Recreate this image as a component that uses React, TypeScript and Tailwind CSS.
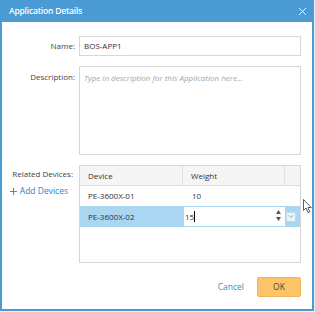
import { Plus, X, ChevronDown } from "lucide-react";

const font = { fontFamily: '"Open Sans", "Liberation Sans", sans-serif' };

export default function App() {
  return (
    <div className="relative w-[315px] h-[312px] bg-[#eef0f2] overflow-hidden" style={font}>
      <div className="flex flex-col w-[314px] h-[311px] bg-white border-x-2 border-b-2 border-[#4a9ad4]">
        <div className="flex items-center justify-between h-[22px] -mx-[2px] pl-[9px] pr-[5px] bg-[#4a9ad4] text-white">
          <span className="text-[8.5px] font-semibold tracking-[-0.2px]">Application Details</span>
          <X size={13} strokeWidth={1.6} />
        </div>

        <div className="flex flex-col gap-[10px] pt-[14px] pr-[11px] text-[8px] text-[#444]">
          <div className="flex items-center gap-[4px]">
            <label className="w-[73px] text-right">Name:</label>
            <div className="flex items-center flex-1 h-[20px] px-[4px] border border-[#d6d6d6] text-[#333]">BOS-APP1</div>
          </div>

          <div className="flex items-start gap-[4px]">
            <label className="w-[73px] pt-[5px] text-right">Description:</label>
            <div className="flex-1 h-[89px] px-[4px] pt-[5px] border border-[#d6d6d6] italic text-[#a5a5a5]">
              Type in description for this Application here...
            </div>
          </div>

          <div className="flex items-start gap-[4px]">
            <div className="flex flex-col items-end w-[73px] pt-[3px]">
              <span className="pr-[2px]">Related Devices:</span>
              <span className="flex items-center gap-[1px] pr-[7px] mt-[5px] text-[8.5px] text-[#2b84c8]">
                <Plus size={11} strokeWidth={2} />
                Add Devices
              </span>
            </div>
            <div className="flex flex-col flex-1 h-[98px] border border-[#d6d6d6] text-[#333]">
              <div className="flex h-[20px] bg-[#f5f5f5] border-b border-[#dcdcdc]">
                <div className="flex items-center w-[103px] pl-[8px] border-r border-[#e2e2e2]">Device</div>
                <div className="flex items-center w-[102px] pl-[8px] border-r border-[#e2e2e2]">Weight</div>
                <div className="flex-1" />
              </div>
              <div className="flex items-center h-[20px]">
                <div className="w-[103px] pl-[8px]">PE-3600X-01</div>
                <div className="pl-[9px]">10</div>
              </div>
              <div className="flex items-center h-[21px] bg-[#abd6f2]">
                <div className="w-[104px] pl-[8px]">PE-3600X-02</div>
                <div className="relative flex items-center w-[101px] h-[19px] bg-white">
                  <span className="pl-[1px]">15</span>
                  <span className="w-[1px] h-[11px] bg-black" />
                  <div className="absolute right-[4px] top-[3px] flex flex-col items-center leading-none">
                    <svg width="5" height="4" viewBox="0 0 5 4"><path d="M0 4 L2.5 0 L5 4 Z" fill="#555" /></svg>
                    <svg width="5" height="4" viewBox="0 0 5 4" className="mt-[3px]"><path d="M0 0 L2.5 4 L5 0 Z" fill="#555" /></svg>
                  </div>
                </div>
                <div className="flex items-center justify-center w-[10px] h-[10px] ml-[1px] bg-[#e8f3fb] border border-[#bfd8ea] text-[#4a7faa]">
                  <ChevronDown size={9} strokeWidth={1.6} />
                </div>
              </div>
            </div>
          </div>

          <div className="flex items-center justify-end gap-[13px] mt-[4px]">
            <span className="text-[8.5px] text-[#3d8ac4]">Cancel</span>
            <button className="w-[44px] h-[20px] rounded-[2px] bg-[#fdc56a] border border-[#f2b455] text-[8.5px] text-[#444]">OK</button>
          </div>
        </div>
      </div>

      <svg className="absolute left-[303px] top-[199px]" width="10" height="15" viewBox="0 0 10 15">
        <path d="M0.5 0.5 L0.5 11.5 L3 9 L5 13.5 L6.8 12.7 L4.8 8.5 L8.2 8.5 Z" fill="white" stroke="#333" strokeWidth="0.8" strokeLinejoin="round" />
      </svg>
    </div>
  );
}
